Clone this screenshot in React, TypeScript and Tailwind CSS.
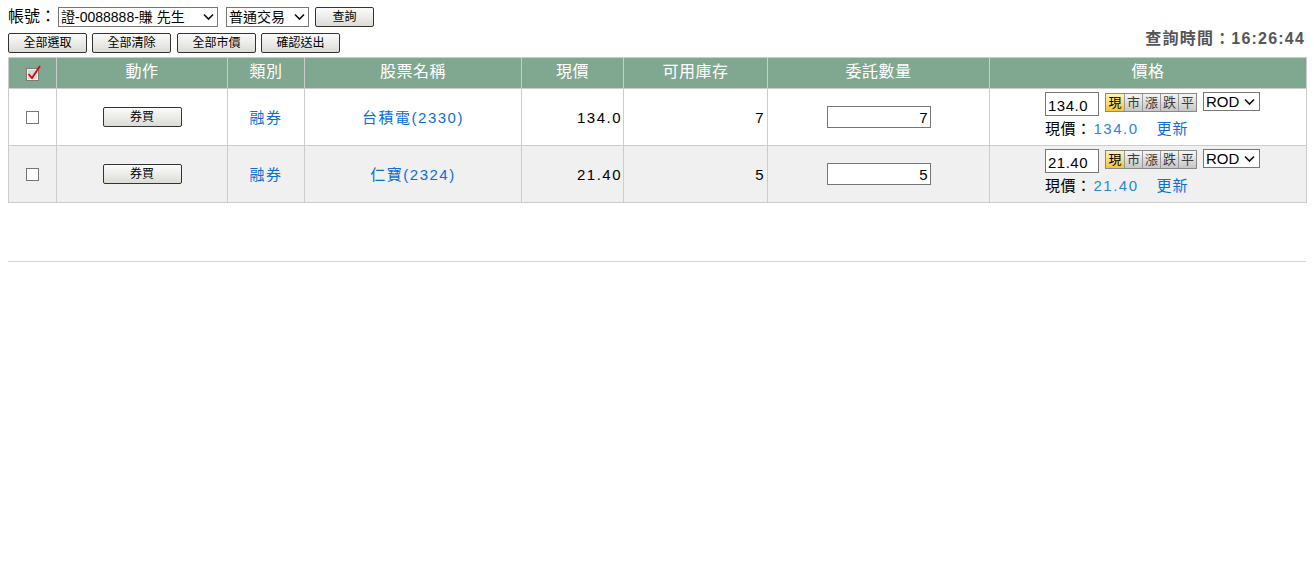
import React from "react";

const FONT = { fontFamily: '"Liberation Sans", Arial, "Noto Sans CJK TC", sans-serif' };

function Chevron() {
  return (
    <svg width="11" height="8" viewBox="0 0 11 8" className="shrink-0">
      <path d="M1 1.5 L5.5 6 L10 1.5" fill="none" stroke="#111" strokeWidth="1.6" />
    </svg>
  );
}

function FakeSelect({ label, w }: { label: string; w: string }) {
  return (
    <div className={`${w} h-[20px] border border-[#767676] bg-white flex items-center justify-between pl-[2px] pr-[3px] text-[14px] leading-none text-black`}>
      <span className="whitespace-nowrap">{label}</span>
      <Chevron />
    </div>
  );
}

function Btn({ label, w }: { label: string; w: string }) {
  return (
    <button className={`${w} h-[20px] border border-[#333] rounded-[2px] bg-gradient-to-b from-[#fbfbfb] to-[#dcdcd6] text-[12px] leading-none text-black flex items-center justify-center`}>
      {label}
    </button>
  );
}

function HeaderCheck() {
  return (
    <svg width="18" height="18" viewBox="0 0 18 18" className="mx-auto">
      <rect x="2.5" y="4.5" width="12" height="12" fill="#d8d8d8" stroke="#7a7a7a" />
      <rect x="3.5" y="5.5" width="10" height="10" fill="none" stroke="#f4f4f4" />
      <path d="M4.5 10 L8 14 L16 2" fill="none" stroke="#e00000" strokeWidth="1.8" />
    </svg>
  );
}

function QuickBtns() {
  const items = ["現", "市", "漲", "跌", "平"];
  return (
    <div className="flex border border-[#888]">
      {items.map((t, i) => (
        <div
          key={t}
          className={`w-[18px] h-[17px] flex items-center justify-center text-[13px] leading-none ${i > 0 ? "border-l border-[#999]" : ""} ${
            i === 0
              ? "bg-gradient-to-b from-[#fff6b0] to-[#f2c530] text-black"
              : "bg-gradient-to-b from-[#f6f6f6] to-[#c6c6c6] text-[#3a3a3a]"
          }`}
        >
          {t}
        </div>
      ))}
    </div>
  );
}

type Row = { name: string; price: string; stock: string; qty: string };

const rows: Row[] = [
  { name: "台積電(2330)", price: "134.0", stock: "7", qty: "7" },
  { name: "仁寶(2324)", price: "21.40", stock: "5", qty: "5" },
];

export default function App() {
  return (
    <div className="bg-white w-[1314px] h-[570px] px-2 text-black" style={FONT}>
      <div className="pt-[7px] flex items-center h-[27px]">
        <span className="text-[16px] leading-none mr-[2px]">帳號：</span>
        <FakeSelect label="證-0088888-賺 先生" w="w-[160px]" />
        <div className="w-[8px]" />
        <FakeSelect label="普通交易" w="w-[83px]" />
        <div className="w-[6px]" />
        <Btn label="查詢" w="w-[59px]" />
      </div>
      <div className="mt-[6px] flex items-center justify-between h-[20px]">
        <div className="flex items-center">
          <Btn label="全部選取" w="w-[79px]" />
          <div className="w-[5px]" />
          <Btn label="全部清除" w="w-[79px]" />
          <div className="w-[6px]" />
          <Btn label="全部市價" w="w-[79px]" />
          <div className="w-[5px]" />
          <Btn label="確認送出" w="w-[79px]" />
        </div>
        <div className="text-[16px] font-bold text-[#555] leading-none mr-[1px] mt-[-8px] tracking-[1.2px]">查詢時間：16:26:44</div>
      </div>
      <table className="mt-[4px] w-[1298px] table-fixed border-collapse">
        <colgroup>
          <col className="w-[48px]" />
          <col className="w-[171px]" />
          <col className="w-[77px]" />
          <col className="w-[217px]" />
          <col className="w-[102px]" />
          <col className="w-[144px]" />
          <col className="w-[222px]" />
          <col className="w-[317px]" />
        </colgroup>
        <thead>
          <tr className="bg-[#80a891] text-white text-[16px] leading-none h-[31px]">
            <th className="border border-[#cccccc] font-normal align-middle"><HeaderCheck /></th>
            {["動作", "類別", "股票名稱", "現價", "可用庫存", "委託數量", "價格"].map((h) => (
              <th key={h} className="border border-[#cccccc] font-normal align-middle pb-[2px] tracking-[0.5px]">{h}</th>
            ))}
          </tr>
        </thead>
        <tbody>
          {rows.map((r, i) => (
            <tr key={r.name} className={`h-[57px] ${i === 1 ? "bg-[#f0f0f0]" : "bg-white"} text-[15px] leading-none`}>
              <td className="border border-[#cccccc] align-middle">
                <div className="mx-auto w-[13px] h-[13px] border border-[#767676] bg-white" />
              </td>
              <td className="border border-[#cccccc] align-middle">
                <div className="flex justify-center">
                  <Btn label="券買" w="w-[79px]" />
                </div>
              </td>
              <td className="border border-[#cccccc] align-middle text-center text-[#0a6fd6] tracking-[1.5px]">融券</td>
              <td className="border border-[#cccccc] align-middle text-center text-[#0a6fd6] tracking-[1.5px]">{r.name}</td>
              <td className="border border-[#cccccc] align-middle text-right pr-[1px] tracking-[1.5px]">{r.price}</td>
              <td className="border border-[#cccccc] align-middle text-right pr-[2px] tracking-[1.5px]">{r.stock}</td>
              <td className="border border-[#cccccc] align-middle">
                <div className="mx-auto w-[104px] h-[22px] border border-[#767676] bg-white flex items-center justify-end pr-[2px] text-[15px]">{r.qty}</div>
              </td>
              <td className="border border-[#cccccc] align-middle">
                <div className="pl-[55px] flex flex-col gap-[4px] pb-[6px]">
                  <div className="flex items-start">
                    <div className="w-[54px] h-[24px] border border-[#767676] bg-white flex items-center pl-[2px] text-[15px] tracking-[0.5px] pt-[2px]">{r.price}</div>
                    <div className="w-[6px]" />
                    <div className="pt-[1px]"><QuickBtns /></div>
                    <div className="w-[6px]" />
                    <div className="w-[57px] h-[19px] border border-[#767676] bg-white flex items-center justify-between pl-[2px] pr-[4px] text-[15px] leading-none">
                      <span>ROD</span>
                      <Chevron />
                    </div>
                  </div>
                  <div className="flex items-center text-[15px] leading-none h-[16px]">
                    <span className="tracking-[0.5px]">現價：</span>
                    <span className="text-[#2b86dc] tracking-[1.5px] ml-[2px]">{r.price}</span>
                    <span className="text-[#0a6fd6] tracking-[1px] ml-[18px]">更新</span>
                  </div>
                </div>
              </td>
            </tr>
          ))}
        </tbody>
      </table>
      <div className="mt-[58px] w-[1298px] border-t border-[#d4d4d4]" />
    </div>
  );
}
